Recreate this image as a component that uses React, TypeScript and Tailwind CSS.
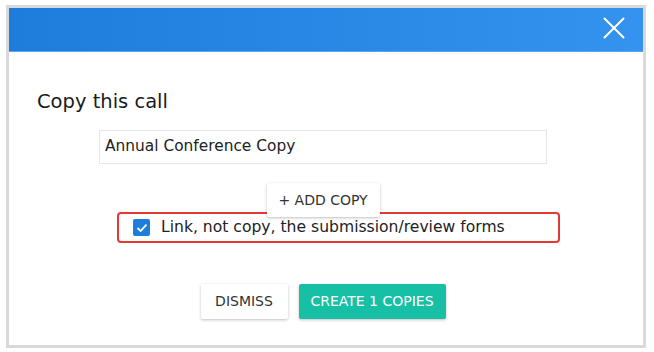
import React from 'react';

export default function App() {
  return (
    <div className="w-[654px] h-[352px] bg-white pt-[5px] pl-[6px] font-['DejaVu_Sans',sans-serif] text-[#222]">
      <div className="w-[640px] h-[343px] border-[3px] border-[#d9d9d9] flex flex-col">
        {/* Header */}
        <div className="h-[44px] bg-gradient-to-r from-[#1e7ddb] to-[#3393ee] flex items-center justify-end pr-[18px] pb-[4px] border-b border-[#5aa5ee]">
          <svg width="22" height="22" viewBox="0 0 22 22" fill="none" stroke="white" strokeWidth="2" strokeLinecap="round">
            <path d="M1.5 1.5 L20.5 20.5 M20.5 1.5 L1.5 20.5" />
          </svg>
        </div>

        {/* Body */}
        <div className="flex-1 flex flex-col">
          <h2 className="pl-[28px] pt-[37px] text-[19.5px] leading-[26px] text-[#1a1a1a]">Copy this call</h2>

          <div className="pl-[90px] pt-[15px]">
            <div className="w-[448px] h-[34px] border border-[#e6e6e6] flex items-center pl-[5px] text-[15.4px] text-[#222]">
              Annual Conference Copy
            </div>
          </div>

          <div className="flex justify-center pt-[19px] pr-[6px]">
            <button className="w-[113px] h-[34px] bg-white shadow-[0_1px_3px_rgba(0,0,0,0.25)] rounded-[2px] text-[14px] text-[#333] relative z-10">
              + ADD COPY
            </button>
          </div>

          <div className="pl-[108px] -mt-[5px]">
            <div className="w-[443px] h-[31px] border-[2.5px] border-[#e53935] rounded-[4px] flex items-center pl-[14px] gap-[11px]">
              <span className="w-[17px] h-[17px] rounded-[2px] bg-[#1e7ddb] flex items-center justify-center">
                <svg width="12" height="12" viewBox="0 0 12 12" fill="none" stroke="white" strokeWidth="1.8">
                  <path d="M1.5 6 L4.6 9 L10.5 2.6" />
                </svg>
              </span>
              <span className="text-[15.6px] text-[#222]">Link, not copy, the submission/review forms</span>
            </div>
          </div>

          <div className="flex justify-center gap-[11px] pt-[41px] pr-[6px]">
            <button className="w-[87px] h-[35px] bg-white shadow-[0_1px_3px_rgba(0,0,0,0.25)] rounded-[2px] text-[14px] text-[#333]">
              DISMISS
            </button>
            <button className="w-[147px] h-[35px] bg-[#17bfa5] shadow-[0_1px_3px_rgba(0,0,0,0.25)] rounded-[2px] text-[14px] text-white">
              CREATE 1 COPIES
            </button>
          </div>
        </div>
      </div>
    </div>
  );
}
